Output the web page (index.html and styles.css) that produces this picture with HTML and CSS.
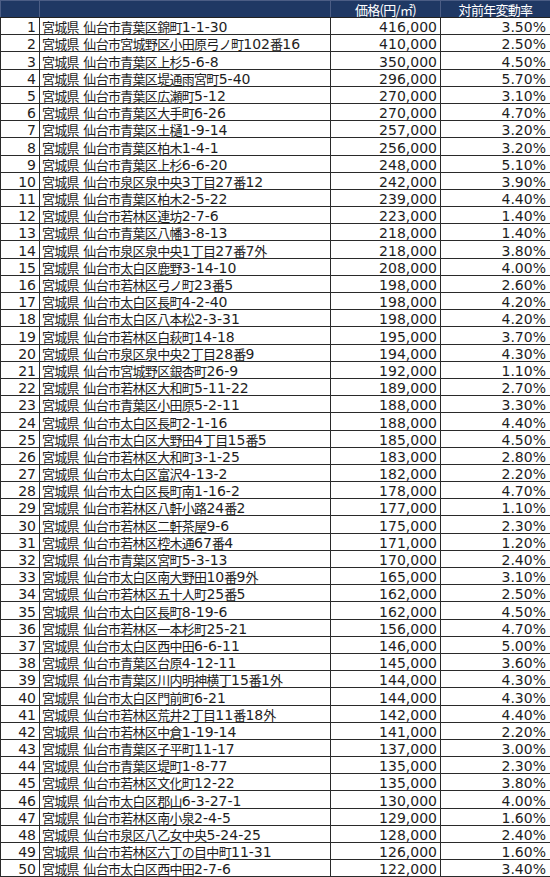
FILE: index.html
```html
<!DOCTYPE html>
<html lang="ja">
<head>
<meta charset="utf-8">
<title>宮城県 地価ランキング</title>
<link rel="stylesheet" href="styles.css">
</head>
<body>
<table class="tbl">
<colgroup><col class="c-no"><col class="c-addr"><col class="c-price"><col class="c-rate"></colgroup>
<thead>
<tr><th></th><th></th><th><span class="j">価格(円/㎡)</span></th><th><span class="j">対前年変動率</span></th></tr>
</thead>
<tbody>
<tr><td class="no">1</td><td class="addr"><span class="j">宮城県</span> <span class="j">仙台市青葉区錦町</span>1-1-30</td><td class="num">416,000</td><td class="num pct">3.50%</td></tr>
<tr><td class="no">2</td><td class="addr"><span class="j">宮城県</span> <span class="j">仙台市宮城野区小田原弓ノ町</span>102<span class="j">番</span>16</td><td class="num">410,000</td><td class="num pct">2.50%</td></tr>
<tr><td class="no">3</td><td class="addr"><span class="j">宮城県</span> <span class="j">仙台市青葉区上杉</span>5-6-8</td><td class="num">350,000</td><td class="num pct">4.50%</td></tr>
<tr><td class="no">4</td><td class="addr"><span class="j">宮城県</span> <span class="j">仙台市青葉区堤通雨宮町</span>5-40</td><td class="num">296,000</td><td class="num pct">5.70%</td></tr>
<tr><td class="no">5</td><td class="addr"><span class="j">宮城県</span> <span class="j">仙台市青葉区広瀬町</span>5-12</td><td class="num">270,000</td><td class="num pct">3.10%</td></tr>
<tr><td class="no">6</td><td class="addr"><span class="j">宮城県</span> <span class="j">仙台市青葉区大手町</span>6-26</td><td class="num">270,000</td><td class="num pct">4.70%</td></tr>
<tr><td class="no">7</td><td class="addr"><span class="j">宮城県</span> <span class="j">仙台市青葉区土樋</span>1-9-14</td><td class="num">257,000</td><td class="num pct">3.20%</td></tr>
<tr><td class="no">8</td><td class="addr"><span class="j">宮城県</span> <span class="j">仙台市青葉区柏木</span>1-4-1</td><td class="num">256,000</td><td class="num pct">3.20%</td></tr>
<tr><td class="no">9</td><td class="addr"><span class="j">宮城県</span> <span class="j">仙台市青葉区上杉</span>6-6-20</td><td class="num">248,000</td><td class="num pct">5.10%</td></tr>
<tr><td class="no">10</td><td class="addr"><span class="j">宮城県</span> <span class="j">仙台市泉区泉中央</span>3<span class="j">丁目</span>27<span class="j">番</span>12</td><td class="num">242,000</td><td class="num pct">3.90%</td></tr>
<tr><td class="no">11</td><td class="addr"><span class="j">宮城県</span> <span class="j">仙台市青葉区柏木</span>2-5-22</td><td class="num">239,000</td><td class="num pct">4.40%</td></tr>
<tr><td class="no">12</td><td class="addr"><span class="j">宮城県</span> <span class="j">仙台市若林区連坊</span>2-7-6</td><td class="num">223,000</td><td class="num pct">1.40%</td></tr>
<tr><td class="no">13</td><td class="addr"><span class="j">宮城県</span> <span class="j">仙台市青葉区八幡</span>3-8-13</td><td class="num">218,000</td><td class="num pct">1.40%</td></tr>
<tr><td class="no">14</td><td class="addr"><span class="j">宮城県</span> <span class="j">仙台市泉区泉中央</span>1<span class="j">丁目</span>27<span class="j">番</span>7<span class="j">外</span></td><td class="num">218,000</td><td class="num pct">3.80%</td></tr>
<tr><td class="no">15</td><td class="addr"><span class="j">宮城県</span> <span class="j">仙台市太白区鹿野</span>3-14-10</td><td class="num">208,000</td><td class="num pct">4.00%</td></tr>
<tr><td class="no">16</td><td class="addr"><span class="j">宮城県</span> <span class="j">仙台市若林区弓ノ町</span>23<span class="j">番</span>5</td><td class="num">198,000</td><td class="num pct">2.60%</td></tr>
<tr><td class="no">17</td><td class="addr"><span class="j">宮城県</span> <span class="j">仙台市太白区長町</span>4-2-40</td><td class="num">198,000</td><td class="num pct">4.20%</td></tr>
<tr><td class="no">18</td><td class="addr"><span class="j">宮城県</span> <span class="j">仙台市太白区八本松</span>2-3-31</td><td class="num">198,000</td><td class="num pct">4.20%</td></tr>
<tr><td class="no">19</td><td class="addr"><span class="j">宮城県</span> <span class="j">仙台市若林区白萩町</span>14-18</td><td class="num">195,000</td><td class="num pct">3.70%</td></tr>
<tr><td class="no">20</td><td class="addr"><span class="j">宮城県</span> <span class="j">仙台市泉区泉中央</span>2<span class="j">丁目</span>28<span class="j">番</span>9</td><td class="num">194,000</td><td class="num pct">4.30%</td></tr>
<tr><td class="no">21</td><td class="addr"><span class="j">宮城県</span> <span class="j">仙台市宮城野区銀杏町</span>26-9</td><td class="num">192,000</td><td class="num pct">1.10%</td></tr>
<tr><td class="no">22</td><td class="addr"><span class="j">宮城県</span> <span class="j">仙台市若林区大和町</span>5-11-22</td><td class="num">189,000</td><td class="num pct">2.70%</td></tr>
<tr><td class="no">23</td><td class="addr"><span class="j">宮城県</span> <span class="j">仙台市青葉区小田原</span>5-2-11</td><td class="num">188,000</td><td class="num pct">3.30%</td></tr>
<tr><td class="no">24</td><td class="addr"><span class="j">宮城県</span> <span class="j">仙台市太白区長町</span>2-1-16</td><td class="num">188,000</td><td class="num pct">4.40%</td></tr>
<tr><td class="no">25</td><td class="addr"><span class="j">宮城県</span> <span class="j">仙台市太白区大野田</span>4<span class="j">丁目</span>15<span class="j">番</span>5</td><td class="num">185,000</td><td class="num pct">4.50%</td></tr>
<tr><td class="no">26</td><td class="addr"><span class="j">宮城県</span> <span class="j">仙台市若林区大和町</span>3-1-25</td><td class="num">183,000</td><td class="num pct">2.80%</td></tr>
<tr><td class="no">27</td><td class="addr"><span class="j">宮城県</span> <span class="j">仙台市太白区富沢</span>4-13-2</td><td class="num">182,000</td><td class="num pct">2.20%</td></tr>
<tr><td class="no">28</td><td class="addr"><span class="j">宮城県</span> <span class="j">仙台市太白区長町南</span>1-16-2</td><td class="num">178,000</td><td class="num pct">4.70%</td></tr>
<tr><td class="no">29</td><td class="addr"><span class="j">宮城県</span> <span class="j">仙台市若林区八軒小路</span>24<span class="j">番</span>2</td><td class="num">177,000</td><td class="num pct">1.10%</td></tr>
<tr><td class="no">30</td><td class="addr"><span class="j">宮城県</span> <span class="j">仙台市若林区二軒茶屋</span>9-6</td><td class="num">175,000</td><td class="num pct">2.30%</td></tr>
<tr><td class="no">31</td><td class="addr"><span class="j">宮城県</span> <span class="j">仙台市若林区椌木通</span>67<span class="j">番</span>4</td><td class="num">171,000</td><td class="num pct">1.20%</td></tr>
<tr><td class="no">32</td><td class="addr"><span class="j">宮城県</span> <span class="j">仙台市青葉区宮町</span>5-3-13</td><td class="num">170,000</td><td class="num pct">2.40%</td></tr>
<tr><td class="no">33</td><td class="addr"><span class="j">宮城県</span> <span class="j">仙台市太白区南大野田</span>10<span class="j">番</span>9<span class="j">外</span></td><td class="num">165,000</td><td class="num pct">3.10%</td></tr>
<tr><td class="no">34</td><td class="addr"><span class="j">宮城県</span> <span class="j">仙台市若林区五十人町</span>25<span class="j">番</span>5</td><td class="num">162,000</td><td class="num pct">2.50%</td></tr>
<tr><td class="no">35</td><td class="addr"><span class="j">宮城県</span> <span class="j">仙台市太白区長町</span>8-19-6</td><td class="num">162,000</td><td class="num pct">4.50%</td></tr>
<tr><td class="no">36</td><td class="addr"><span class="j">宮城県</span> <span class="j">仙台市若林区一本杉町</span>25-21</td><td class="num">156,000</td><td class="num pct">4.70%</td></tr>
<tr><td class="no">37</td><td class="addr"><span class="j">宮城県</span> <span class="j">仙台市太白区西中田</span>6-6-11</td><td class="num">146,000</td><td class="num pct">5.00%</td></tr>
<tr><td class="no">38</td><td class="addr"><span class="j">宮城県</span> <span class="j">仙台市青葉区台原</span>4-12-11</td><td class="num">145,000</td><td class="num pct">3.60%</td></tr>
<tr><td class="no">39</td><td class="addr"><span class="j">宮城県</span> <span class="j">仙台市青葉区川内明神横丁</span>15<span class="j">番</span>1<span class="j">外</span></td><td class="num">144,000</td><td class="num pct">4.30%</td></tr>
<tr><td class="no">40</td><td class="addr"><span class="j">宮城県</span> <span class="j">仙台市太白区門前町</span>6-21</td><td class="num">144,000</td><td class="num pct">4.30%</td></tr>
<tr><td class="no">41</td><td class="addr"><span class="j">宮城県</span> <span class="j">仙台市若林区荒井</span>2<span class="j">丁目</span>11<span class="j">番</span>18<span class="j">外</span></td><td class="num">142,000</td><td class="num pct">4.40%</td></tr>
<tr><td class="no">42</td><td class="addr"><span class="j">宮城県</span> <span class="j">仙台市若林区中倉</span>1-19-14</td><td class="num">141,000</td><td class="num pct">2.20%</td></tr>
<tr><td class="no">43</td><td class="addr"><span class="j">宮城県</span> <span class="j">仙台市青葉区子平町</span>11-17</td><td class="num">137,000</td><td class="num pct">3.00%</td></tr>
<tr><td class="no">44</td><td class="addr"><span class="j">宮城県</span> <span class="j">仙台市青葉区堤町</span>1-8-77</td><td class="num">135,000</td><td class="num pct">2.30%</td></tr>
<tr><td class="no">45</td><td class="addr"><span class="j">宮城県</span> <span class="j">仙台市若林区文化町</span>12-22</td><td class="num">135,000</td><td class="num pct">3.80%</td></tr>
<tr><td class="no">46</td><td class="addr"><span class="j">宮城県</span> <span class="j">仙台市太白区郡山</span>6-3-27-1</td><td class="num">130,000</td><td class="num pct">4.00%</td></tr>
<tr><td class="no">47</td><td class="addr"><span class="j">宮城県</span> <span class="j">仙台市若林区南小泉</span>2-4-5</td><td class="num">129,000</td><td class="num pct">1.60%</td></tr>
<tr><td class="no">48</td><td class="addr"><span class="j">宮城県</span> <span class="j">仙台市泉区八乙女中央</span>5-24-25</td><td class="num">128,000</td><td class="num pct">2.40%</td></tr>
<tr><td class="no">49</td><td class="addr"><span class="j">宮城県</span> <span class="j">仙台市若林区六丁の目中町</span>11-31</td><td class="num">126,000</td><td class="num pct">1.60%</td></tr>
<tr><td class="no">50</td><td class="addr"><span class="j">宮城県</span> <span class="j">仙台市太白区西中田</span>2-7-6</td><td class="num">122,000</td><td class="num pct">3.40%</td></tr>
</tbody>
</table>
</body>
</html>
```
FILE: styles.css
```css
html, body {
  margin: 0;
  padding: 0;
  background: #ffffff;
}

.tbl {
  width: 550px;
  table-layout: fixed;
  border-collapse: collapse;
  font-family: "DejaVu Sans", "Noto Sans CJK JP", sans-serif;
  font-size: 14px;
  color: #1e1e1e;
}

.c-no { width: 39px; }
.c-addr { width: 291px; }
.c-price { width: 110px; }
.c-rate { width: 110px; }

.tbl tr {
  height: 17.2px;
}

.tbl thead tr {
  height: 17px;
}

.tbl th {
  height: 16px;
  padding: 0;
  background: #1f3864;
  color: #ffffff;
  font-weight: normal;
  text-align: center;
  line-height: 13px;
  vertical-align: bottom;
  border: 1px solid #4b5d85;
  border-bottom-color: #222222;
}

.tbl td {
  height: 16px;
  padding: 0;
  line-height: 13px;
  vertical-align: bottom;
  border: 1px solid #2a2a2a;
  white-space: nowrap;
  overflow: hidden;
}

.no {
  text-align: right;
  padding-right: 3px !important;
}

.addr {
  text-align: left;
  padding-left: 2px !important;
}

.num {
  text-align: right;
  padding-right: 3px !important;
}

.pct {
  padding-right: 4px !important;
}

.j {
  font-family: "Noto Sans CJK JP", sans-serif;
  font-size: 13px;
  line-height: 13px;
  letter-spacing: -0.7px;
}
```
